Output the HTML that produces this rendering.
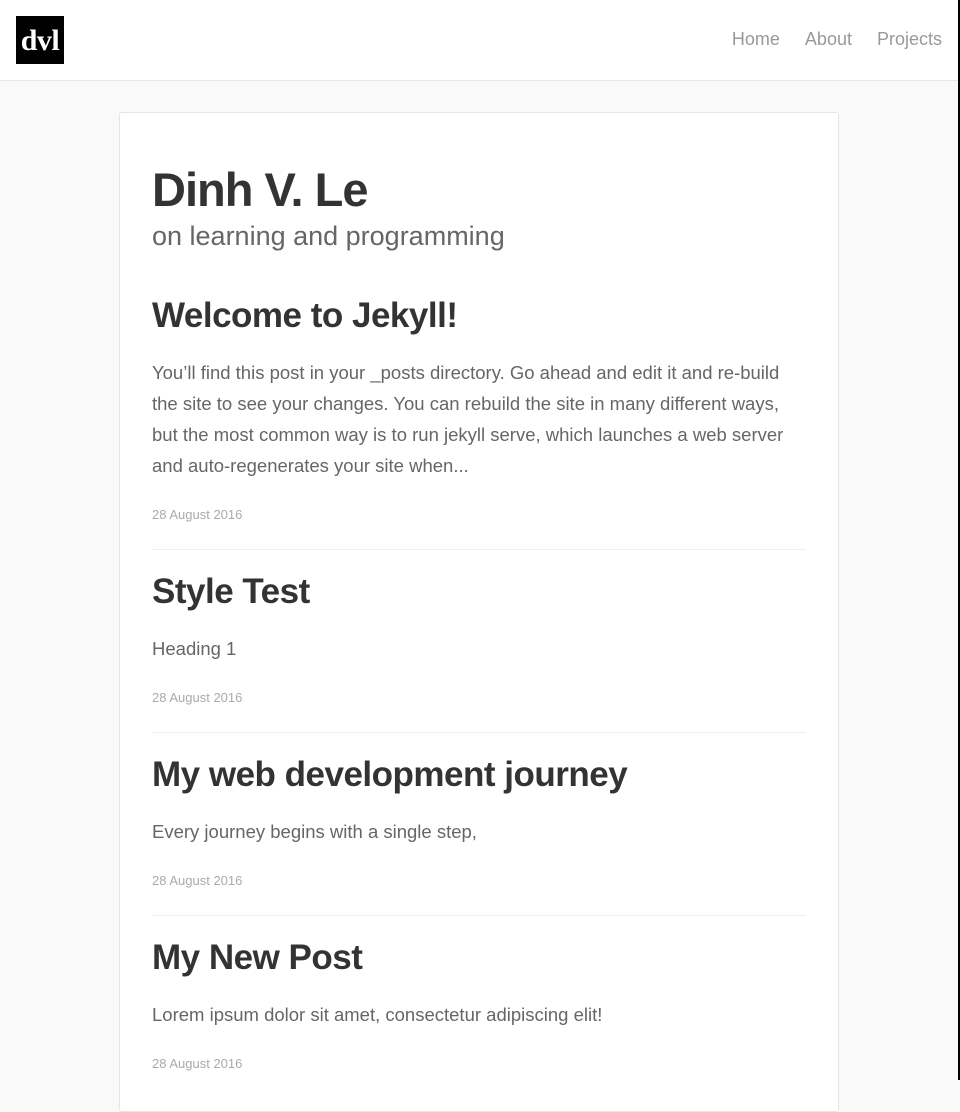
<!DOCTYPE html>
<html><head><meta charset="utf-8"><style>
*{margin:0;padding:0;box-sizing:border-box}
body{width:960px;height:1080px;overflow:hidden;background:#f9f9f9;font-family:"Liberation Sans",sans-serif;color:#333;position:relative}
.hdr{height:81px;background:#fff;border-bottom:1px solid #e8e8e8;position:relative}
.logo{position:absolute;left:16px;top:16px;width:48px;height:48px;background:#000;color:#fff;font-family:"Liberation Serif",serif;font-weight:bold;font-size:30px;line-height:49px;text-align:center;letter-spacing:-0.5px}
.nav{position:absolute;right:18px;top:29px;font-size:18px;color:#999}
.nav span{margin-left:25px}
.bar{position:absolute;right:0;top:0;width:2px;height:1080px;background:#000}
.card{position:absolute;left:119px;top:112px;width:720px;height:1000px;background:#fff;border:1px solid #e6e6e6;border-radius:3px;padding:0 32px}
h1{font-size:47px;font-weight:bold;letter-spacing:-1px;position:absolute;top:49px;left:32px;line-height:56px}
.sub{position:absolute;top:108px;left:32px;font-size:27px;color:#666;font-weight:300}
.post{position:absolute;left:32px;width:654px}
.post h2{font-size:35px;font-weight:bold;letter-spacing:-0.5px;line-height:40px}
.post p{font-size:18.5px;line-height:31px;color:#666;margin-top:21px;width:640px}
.post .d{font-size:13px;color:#aaa;margin-top:26px}
.sep{position:absolute;left:32px;width:654px;border-top:1px solid #eee}
</style></head><body>
<div class="hdr"><div class="logo">dvl</div><div class="nav"><span>Home</span><span>About</span><span>Projects</span></div></div>
<div class="card">
<h1>Dinh V. Le</h1>
<div class="sub">on learning and programming</div>
<div class="post" style="top:183px"><h2>Welcome to Jekyll!</h2><p>You’ll find this post in your _posts directory. Go ahead and edit it and re-build the site to see your changes. You can rebuild the site in many different ways, but the most common way is to run jekyll serve, which launches a web server and auto-regenerates your site when...</p><div class="d">28 August 2016</div></div>
<div class="sep" style="top:436px"></div>
<div class="post" style="top:459px"><h2>Style Test</h2><p>Heading 1</p><div class="d">28 August 2016</div></div>
<div class="sep" style="top:619px"></div>
<div class="post" style="top:642px"><h2>My web development journey</h2><p>Every journey begins with a single step,</p><div class="d">28 August 2016</div></div>
<div class="sep" style="top:802px"></div>
<div class="post" style="top:825px"><h2>My New Post</h2><p>Lorem ipsum dolor sit amet, consectetur adipiscing elit!</p><div class="d">28 August 2016</div></div>
</div>
<div class="bar"></div>
</body></html>
